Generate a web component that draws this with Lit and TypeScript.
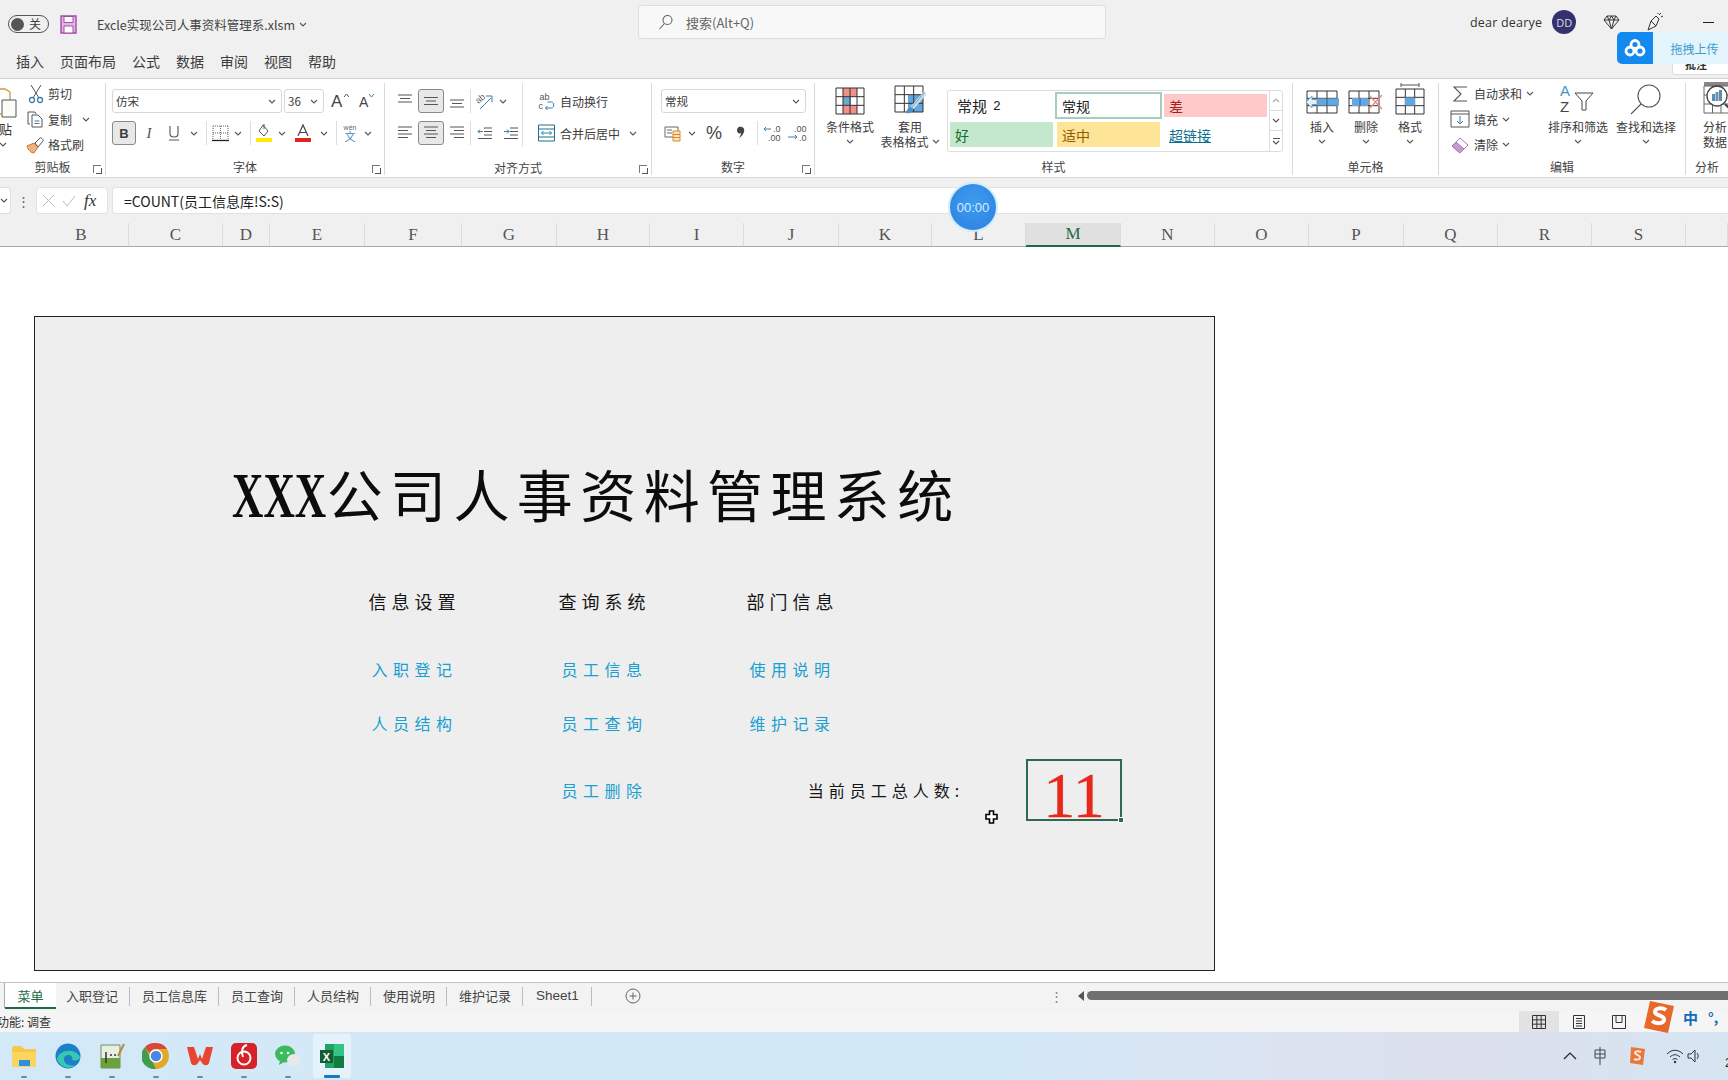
import { LitElement, html, css } from "lit";
import { customElement } from "lit/decorators.js";

const chev = html`<svg class="chev" width="8" height="5" viewBox="0 0 8 5"><path d="M1 1l3 3 3-3" fill="none" stroke="#555" stroke-width="1.1"/></svg>`;

// little table drawn for the ribbon's big buttons
const grid = (x: number, y: number, w: number, h: number, cols: number, rows: number) => {
  const cw = w / cols, rh = h / rows;
  let d = `M${x} ${y}h${w}v${h}h${-w}z`;
  for (let i = 1; i < cols; i++) d += `M${x + cw * i} ${y}v${h}`;
  for (let i = 1; i < rows; i++) d += `M${x} ${y + rh * i}h${w}`;
  return d;
};

const lines = (kind: string) => {
  const rows: Record<string, string> = {
    top: "M2 3h14M4 6.5h10M2 10h14",
    mid: "M2 5.5h14M4 9h10M2 12.5h14",
    bot: "M2 8h14M4 11.5h10M2 15h14",
    left: "M2 3h14M2 6.5h10M2 10h14M2 13.5h10",
    center: "M2 3h14M4 6.5h10M2 10h14M4 13.5h10",
    right: "M2 3h14M6 6.5h10M2 10h14M6 13.5h10",
  };
  return html`<svg width="18" height="18" viewBox="0 0 18 18"><path d=${rows[kind]} fill="none" stroke="#555" stroke-width="1"/></svg>`;
};

const icons = {
  toggleSave: html`<svg width="17" height="19" viewBox="0 0 17 19"><path d="M1 1h15v17H1z" fill="#e3b5e6" stroke="#a04ea6" stroke-width="1.4"/><path d="M4 1.5h9v6H4zM4 11h9v7H4z" fill="#fff" stroke="#a04ea6"/></svg>`,
  search: html`<svg width="16" height="16" viewBox="0 0 16 16"><circle cx="9.5" cy="6" r="4.5" fill="none" stroke="#666" stroke-width="1.1"/><path d="M6.5 9.5L1.5 15" stroke="#666" stroke-width="1.1"/></svg>`,
  diamond: html`<svg width="17" height="15" viewBox="0 0 17 15"><path d="M4 1h9l3 4-7.5 9L1 5zM1 5h15M6 5l2.500 9L11 5M4 1l2 4 2.500-4 2.500 4 2-4" fill="none" stroke="#333"/></svg>`,
  party: html`<svg width="18" height="20" viewBox="0 0 18 20"><path d="M2 18l3-9 5 5zM5 9l5-5 3 3-3 7" fill="none" stroke="#333"/><path d="M13 3l2-2M15 5l2-1M12 1l0 1" stroke="#333"/></svg>`,
  cloud: html`<svg width="22" height="18" viewBox="0 0 22 18"><g fill="none" stroke="#fff" stroke-width="2.800"><circle cx="11" cy="5.500" r="4"/><circle cx="6" cy="12" r="4"/><circle cx="16" cy="12" r="4"/></g></svg>`,
  pasteBoard: html`<svg width="20" height="40" viewBox="0 0 20 40"><path d="M-6 6h12l5 3v8" fill="none" stroke="#c99a3c" stroke-width="1.300"/><path d="M3 17h14v17H3z" fill="#fbfbf7" stroke="#555"/><path d="M0 31h3" stroke="#c99a3c" stroke-width="1.300"/></svg>`,
  cut: html`<svg width="18" height="20" viewBox="0 0 18 20"><path d="M4 1l8 13M14 1L6 14" stroke="#555" fill="none"/><circle cx="5" cy="16" r="2.500" fill="none" stroke="#3b7fa8" stroke-width="1.300"/><circle cx="13" cy="16" r="2.500" fill="none" stroke="#3b7fa8" stroke-width="1.300"/></svg>`,
  copy: html`<svg width="18" height="18" viewBox="0 0 18 18"><path d="M3 14H1V2h7l1 2" fill="none" stroke="#555"/><path d="M5 5h6l4 4v8H5z" fill="#fff" stroke="#555"/><path d="M7.500 11h5M7.500 13.500h5" stroke="#3b7fa8"/></svg>`,
  painter: html`<svg width="20" height="18" viewBox="0 0 20 18"><path d="M1 10l7-3 4 4-4 6c-3 0-6-3-7-7z" fill="#f0b27a" stroke="#c9762f"/><path d="M9 7l5-5c1-1 4 2 3 3l-5 6z" fill="#fff" stroke="#555"/></svg>`,
  growA: html`<svg width="20" height="18" viewBox="0 0 20 18"><text x="1" y="15" font-size="17" font-family="Liberation Sans" fill="#444">A</text><path d="M14 5l2.500-3L19 5" fill="none" stroke="#555"/></svg>`,
  shrinkA: html`<svg width="20" height="18" viewBox="0 0 20 18"><text x="3" y="15" font-size="14" font-family="Liberation Sans" fill="#444">A</text><path d="M13 2l2.500 3L18 2" fill="none" stroke="#3b7fa8"/></svg>`,
  under: html`<svg width="14" height="18" viewBox="0 0 14 18"><path d="M3 2v8c0 4 8 4 8 0V2M2 16h10" fill="none" stroke="#555" stroke-width="1.100"/></svg>`,
  border: html`<svg width="17" height="18" viewBox="0 0 17 18"><path d="M1 2h15M1 9h15M8.500 2v14M1 2v14M16 2v14" fill="none" stroke="#666" stroke-dasharray="1 1"/><path d="M0 16.500h17" stroke="#222" stroke-width="1.300"/></svg>`,
  fill: html`<svg width="18" height="20" viewBox="0 0 18 20"><path d="M8 2l5 6-4 5-5-5z" fill="none" stroke="#555"/><path d="M9 1v5" stroke="#555"/><path d="M1 15h16v4H1z" fill="#ffea00"/></svg>`,
  colorA: html`<svg width="18" height="20" viewBox="0 0 18 20"><path d="M4 13L9 2l5 11M6 9.500h6" fill="none" stroke="#444" stroke-width="1.200"/><path d="M1 15h16v4H1z" fill="#e2231a"/></svg>`,
  wen: html`<svg width="20" height="20" viewBox="0 0 20 20"><text x="10" y="7" font-size="7" text-anchor="middle" font-family="Liberation Sans" fill="#666">wén</text><text x="10" y="18" font-size="11" text-anchor="middle" font-family="Noto Sans CJK SC" fill="#3b8fb8">文</text></svg>`,
  orient: html`<svg width="20" height="20" viewBox="0 0 20 20"><text x="2" y="11" font-size="9" transform="rotate(-40 6 9)" font-family="Liberation Sans" fill="#666">ab</text><path d="M6 18L17 7M12 5h6v6" fill="none" stroke="#3b7fa8"/></svg>`,
  wrap: html`<svg width="18" height="20" viewBox="0 0 18 20"><text x="2" y="9" font-size="9" font-family="Liberation Sans" fill="#555">ab</text><text x="1" y="18" font-size="9" font-family="Liberation Sans" fill="#555">c</text><path d="M10 11h4c3 0 3 6 0 6H8m2-2l-2 2 2 2" fill="none" stroke="#3b7fa8"/></svg>`,
  outdent: html`<svg width="18" height="18" viewBox="0 0 18 18"><path d="M8 4h8M8 7.500h8M8 11h8M2 14.500h14" stroke="#555" fill="none"/><path d="M7 7.500H2m2-2l-2 2 2 2" stroke="#3b7fa8" fill="none"/></svg>`,
  indent: html`<svg width="18" height="18" viewBox="0 0 18 18"><path d="M8 4h8M8 7.500h8M8 11h8M2 14.500h14" stroke="#555" fill="none"/><path d="M2 7.500h5m-2-2l2 2-2 2" stroke="#3b7fa8" fill="none"/></svg>`,
  merge: html`<svg width="18" height="18" viewBox="0 0 18 18"><path d="M1 1h16v16H1zM1 5h16M1 13h16" fill="none" stroke="#1f6e8c"/><path d="M4 9h10M6 7L4 9l2 2M12 7l2 2-2 2" fill="none" stroke="#3b7fa8"/></svg>`,
  money: html`<svg width="18" height="18" viewBox="0 0 18 18"><path d="M1 3h13v10H1z" fill="#fff" stroke="#666"/><path d="M3 6h5M3 9h5" stroke="#666"/><path d="M9 7h7v10H9z" fill="#fbe3c0" stroke="#d98a2b"/><path d="M9 10.500h7M9 13.500h7" stroke="#d98a2b"/></svg>`,
  comma: html`<svg width="10" height="16" viewBox="0 0 10 16"><path d="M3 2c4-1 6 2 5 5-1 3-3 5-5 6 1-2 2-3 2-5-2 1-4 0-4-3 0-1 1-3 2-3z" fill="#444"/></svg>`,
  decUp: html`<svg width="22" height="18" viewBox="0 0 22 18"><text x="11" y="8" font-size="9" font-family="Liberation Sans" fill="#555">.0</text><text x="6" y="17" font-size="9" font-family="Liberation Sans" fill="#555">.00</text><path d="M9 5H2m2-2L2 5l2 2" fill="none" stroke="#3b7fa8"/></svg>`,
  decDown: html`<svg width="22" height="18" viewBox="0 0 22 18"><text x="8" y="8" font-size="9" font-family="Liberation Sans" fill="#555">.00</text><text x="13" y="17" font-size="9" font-family="Liberation Sans" fill="#555">.0</text><path d="M2 13h9m-2-2l2 2-2 2" fill="none" stroke="#3b7fa8"/></svg>`,
  condFmt: html`<svg width="30" height="28" viewBox="0 0 30 28"><path d="M8 1h14v8.700H8zM8 18.300h14V27H8z" fill="#f28f86"/><path d="M8 9.700h8v8.600H8z" fill="#6fa8cf"/><path d=${grid(1, 1, 28, 26, 4, 3)} fill="none" stroke="#333"/></svg>`,
  tableFmt: html`<svg width="32" height="30" viewBox="0 0 32 30"><path d="M14 10h15v17H14z" fill="#62a7e0"/><path d=${grid(1, 1, 28, 26, 3, 3)} fill="none" stroke="#333"/><path d="M31 8L18 23" stroke="#c8dbe8" stroke-width="4"/><path d="M31 7L18 22" stroke="#7fa7bf" stroke-width="1"/><path d="M12 28c1-5 4-7 7-5 0 4-3 6-7 5z" fill="#4b91c2"/></svg>`,
  insert: html`<svg width="36" height="26" viewBox="0 0 36 26"><path d=${grid(3, 2, 30, 22, 3, 3)} fill="none" stroke="#333"/><path d="M12 9.500h23v7H12z" fill="#62a7e0"/><path d="M23 9.500v7" stroke="#2a5f85"/><path d="M13 10.500H8V7l-6 6 6 6v-3.500h5z" fill="#e4eff6" stroke="#6aa6cb"/></svg>`,
  remove: html`<svg width="36" height="26" viewBox="0 0 36 26"><path d=${grid(1, 2, 30, 22, 3, 3)} fill="none" stroke="#333"/><path d="M4 9h16v8H4z" fill="#62a7e0"/><path d="M12 9v8" stroke="#2a5f85"/><path d="M21 6l13 14M34 6L21 20" stroke="#e98a82" stroke-width="1.300"/></svg>`,
  format: html`<svg width="30" height="32" viewBox="0 0 30 32"><path d="M6 2h18M6 0v4M24 0v4" stroke="#555"/><path d=${grid(1, 6, 28, 25, 3, 3)} fill="none" stroke="#333"/><path d="M10 14.500h10v8H10z" fill="#62a7e0"/></svg>`,
  sum: html`<svg width="16" height="18" viewBox="0 0 16 18"><path d="M15 2H2l7 7-7 7h13" fill="none" stroke="#555" stroke-width="1.100"/></svg>`,
  fillDown: html`<svg width="20" height="18" viewBox="0 0 20 18"><path d="M1 1h18v16H1zM1 4h18" fill="none" stroke="#555"/><path d="M10 6v8m-3-3l3 3 3-3" fill="none" stroke="#3b7fa8"/></svg>`,
  eraser: html`<svg width="18" height="18" viewBox="0 0 18 18"><path d="M1 10l8-8 8 7-8 8z" fill="#fff" stroke="#a878b4"/><path d="M1 10l4-4 8 7-4 4z" fill="#c79ad0" stroke="#a878b4"/></svg>`,
  sort: html`<svg width="36" height="32" viewBox="0 0 36 32"><text x="0" y="13" font-size="15" font-family="Liberation Sans" fill="#4b91c2">A</text><text x="0" y="29" font-size="15" font-family="Liberation Sans" fill="#444">Z</text><path d="M15 10h18l-7 8v9h-4v-9z" fill="#fff" stroke="#444"/></svg>`,
  find: html`<svg width="34" height="32" viewBox="0 0 34 32"><circle cx="20" cy="13" r="11" fill="none" stroke="#555" stroke-width="1.100"/><path d="M12 21L2 31" stroke="#555" stroke-width="1.100"/></svg>`,
  analyze: html`<svg width="36" height="34" viewBox="0 0 36 34"><path d="M1 1h34v4H1z" fill="#888"/><path d=${grid(1, 5, 34, 27, 4, 3)} fill="#fff" stroke="#666"/><circle cx="14" cy="15" r="10" fill="#fff" stroke="#444" stroke-width="1.300"/><path d="M22 23l9 9" stroke="#444" stroke-width="2"/><path d="M9 13h3v7H9zM16 9h3v11h-3z" fill="#4b91c2"/><path d="M12.500 11h3v9h-3z" fill="#888"/></svg>`,
  normal: html`<svg width="14" height="14" viewBox="0 0 14 14"><path d=${grid(0.5, 0.5, 13, 13, 3, 3)} fill="none" stroke="#333"/></svg>`,
  page: html`<svg width="14" height="14" viewBox="0 0 14 14"><path d="M1.500 .5h11v13h-11zM4 3.500h6M4 6h6M4 8.500h6M4 11h6" fill="none" stroke="#333"/></svg>`,
  breakView: html`<svg width="14" height="14" viewBox="0 0 14 14"><path d="M.5.500h13v13H.500zM4 .5v7h6v-7" fill="none" stroke="#333"/></svg>`,
  addSheet: html`<svg width="16" height="16" viewBox="0 0 16 16"><circle cx="8" cy="8" r="7" fill="none" stroke="#666"/><path d="M8 4.500v7M4.500 8h7" stroke="#666"/></svg>`,
  sogou: html`<svg width="34" height="34" viewBox="0 0 34 34"><path d="M8 1l24 5-6 27-24-5z" fill="#e8672a"/><path d="M24 10c-4-3-11-2-11 2s10 3 9 8c-1 4-8 4-12 1" fill="none" stroke="#fff" stroke-width="4"/></svg>`,
  sogouTray: html`<svg width="18" height="20" viewBox="0 0 18 20"><path d="M3 1l14 2-2 16-13-2z" fill="#e8773d"/><path d="M13 6c-2-1-6-1-6 1s6 2 5 5c-1 2-4 2-6 1" fill="none" stroke="#fbe7d6" stroke-width="2"/></svg>`,
  cursor: html`<svg width="13" height="14" viewBox="0 0 13 14"><path d="M4.500 1h4v3.500H12v4.500H8.500v4h-4V9H1V4.500h3.500z" fill="#fff" stroke="#000" stroke-width="1.600"/></svg>`,
  trayUp: html`<svg width="14" height="10" viewBox="0 0 14 10"><path d="M1 8l6-6 6 6" fill="none" stroke="#222" stroke-width="1.200"/></svg>`,
  trayIme: html`<svg width="14" height="20" viewBox="0 0 14 20"><path d="M2 4h10v8H2zM7 1v18M2 8h10" fill="none" stroke="#444"/></svg>`,
  wifi: html`<svg width="18" height="16" viewBox="0 0 18 16"><path d="M1 6c5-5 11-5 16 0M4 9c3-3 7-3 10 0M6.500 11.500c1.500-1.200 3.500-1.200 5 0" fill="none" stroke="#333"/><circle cx="9" cy="14" r="1.200" fill="#333"/></svg>`,
  speaker: html`<svg width="14" height="16" viewBox="0 0 14 16"><path d="M1 6h3l4-4v12l-4-4H1z" fill="none" stroke="#333"/><path d="M10 5c1.500 2 1.500 4 0 6" fill="none" stroke="#333"/></svg>`,
};

const apps = [
  html`<svg width="28" height="28" viewBox="0 0 28 28"><path d="M2 6c0-1 1-2 2-2h7l3 3h12v18H2z" fill="#f5c84c"/><path d="M2 10h24v15H2z" fill="#fbd65e"/><path d="M9 18h11v6H9z" fill="#2f8fd8"/></svg>`,
  html`<svg width="28" height="28" viewBox="0 0 28 28"><circle cx="14" cy="14" r="12.500" fill="#1b7fc9"/><path d="M3 17C5 8 20 5 26 15c0 3-4 4-8 3 2-5-6-7-8-2-1 5 5 9 12 7-6 5-16 3-19-6z" fill="#36c9b0"/></svg>`,
  html`<svg width="28" height="28" viewBox="0 0 28 28"><path d="M3 3h19v23H3z" fill="#e6efe0" stroke="#6f8f5a"/><path d="M3 16h19v10H3z" fill="#6ea13b"/><path d="M8 10v11M12 13h2M16 13h2" stroke="#333" stroke-width="1.500"/><path d="M20 14l6-12" stroke="#b58a2f" stroke-width="2"/></svg>`,
  html`<svg width="28" height="28" viewBox="0 0 28 28"><circle cx="14" cy="14" r="13" fill="#e0a92a"/><path d="M14 1a13 13 0 0 1 11 6H14a7 7 0 0 0-6.500 4L3 5a13 13 0 0 1 11-4z" fill="#d9463a"/><path d="M3 5l6 12 5 10A13 13 0 0 1 3 5z" fill="#3f9e4d"/><circle cx="14" cy="14" r="6" fill="#4a86e8" stroke="#fff" stroke-width="1.500"/></svg>`,
  html`<svg width="28" height="28" viewBox="0 0 28 28"><path d="M1 5h7l4 12 2-5 2 5 4-12h7l-4 16c-1 3-5 3-7 0l-2-3-2 3c-2 3-6 3-7 0z" fill="#e8442f"/></svg>`,
  html`<svg width="28" height="28" viewBox="0 0 28 28"><rect x="1" y="1" width="26" height="26" rx="5" fill="#d8222a"/><circle cx="14" cy="16" r="6.500" fill="none" stroke="#fff" stroke-width="2"/><path d="M17 3c-5 1-6 6-4 12" fill="none" stroke="#fff" stroke-width="2"/></svg>`,
  html`<svg width="28" height="28" viewBox="0 0 28 28"><ellipse cx="11" cy="12" rx="10" ry="8.500" fill="#3dbb5c"/><path d="M6 18l-1 5 5-3z" fill="#3dbb5c"/><circle cx="7.500" cy="11" r="1.300" fill="#fff"/><circle cx="14" cy="11" r="1.300" fill="#fff"/><ellipse cx="20" cy="18" rx="7" ry="6" fill="#e8e8e8"/></svg>`,
  html`<svg width="28" height="28" viewBox="0 0 28 28"><path d="M7 2h19v24H7z" fill="#21a366"/><path d="M16 2h10v12H16z" fill="#33c481"/><path d="M16 14h10v12H16z" fill="#107c41"/><rect x="2" y="8" width="13" height="13" fill="#185c37"/><text x="8.500" y="18.500" font-size="11" font-weight="bold" text-anchor="middle" font-family="Liberation Sans" fill="#fff">X</text></svg>`,
];

const columns: [string, number][] = [
  ["B", 95], ["C", 94], ["D", 47], ["E", 95], ["F", 97], ["G", 95], ["H", 93], ["I", 94],
  ["J", 95], ["K", 93], ["L", 94], ["M", 95], ["N", 94], ["O", 94], ["P", 95], ["Q", 94],
  ["R", 94], ["S", 94], ["", 42],
];

const menu = ["插入", "页面布局", "公式", "数据", "审阅", "视图", "帮助"];
const sheets = ["入职登记", "员工信息库", "员工查询", "人员结构", "使用说明", "维护记录", "Sheet1"];

@customElement("app-root")
export class AppRoot extends LitElement {
  static styles = css`
    :host {
      display: block;
      width: 1728px;
      height: 1080px;
      overflow: hidden;
      position: relative;
      font-family: "Noto Sans CJK SC", "Liberation Sans", sans-serif;
      font-size: 12px;
      color: #3c3c3c;
      background: #f0f0f0;
    }
    svg { display: block; flex: none; }

    .title {
      height: 48px;
      display: grid;
      grid-template-columns: 638px 468px 1fr;
      align-items: center;
    }
    .title-left { display: flex; align-items: center; padding-left: 8px; }
    .switch {
      width: 41px;
      height: 18px;
      box-sizing: border-box;
      border: 1px solid #555;
      border-radius: 10px;
      display: flex;
      align-items: center;
      gap: 5px;
      padding-left: 2px;
      font-size: 12px;
      line-height: 1;
    }
    .switch i { width: 13px; height: 13px; border-radius: 50%; background: #555; }
    .save { margin-left: 11px; }
    .file { margin-left: 20px; font-size: 12.500px; display: flex; align-items: center; gap: 4px; color: #444; }
    .searchbox {
      height: 32px;
      margin-top: -4px;
      background: #f8f8f8;
      border: 1px solid #ddd;
      border-radius: 3px;
      display: flex;
      align-items: center;
      padding-left: 19px;
      gap: 12px;
      color: #666;
      font-size: 13px;
    }
    .title-right { display: flex; align-items: center; padding-left: 364px; margin-top: -4px; white-space: nowrap; }
    .user { font-family: "Open Sans", sans-serif; font-size: 12.500px; letter-spacing: 0.2px; color: #333; }
    .avatar {
      width: 24px; height: 24px; margin-left: 10px; border-radius: 50%;
      background: #35306e; color: #ddd; font-family: "Open Sans", sans-serif; font-size: 11px;
      display: flex; align-items: center; justify-content: center;
    }
    .gem { margin-left: 27px; }
    .party { margin-left: 26px; }
    .min { margin-left: 39px; width: 11px; height: 1px; background: #222; flex: none; }

    .menu { height: 30px; box-sizing: border-box; padding: 0 0 5px 16px; display: flex; gap: 16px; align-items: center; font-size: 14px; line-height: 1; }

    .ribbon {
      height: 100px;
      box-sizing: border-box;
      background: #fff;
      border-top: 1px solid #d2d2d2;
      border-bottom: 1px solid #d8d8d8;
      display: flex;
      padding: 4px 0 2px;
      overflow: hidden;
    }
    .grp { position: relative; box-sizing: border-box; flex: none; display: flex; flex-direction: column; border-right: 1px solid #d9d9d9; }
    .grp:last-child { border-right: 0; }
    .body { height: 76px; box-sizing: border-box; display: flex; }
    .label { height: 17px; line-height: 17px; text-align: center; font-size: 12px; color: #444; }
    .launch { position: absolute; right: 4px; bottom: 2px; width: 7px; height: 7px; border-left: 1px solid #777; border-top: 1px solid #777; }
    .launch::after { content: ""; position: absolute; left: 2px; top: 2px; width: 5px; height: 5px; border-right: 1px solid #555; border-bottom: 1px solid #555; }
    .g-clip { width: 106px; }
    .g-font { width: 279px; }
    .g-align { width: 267px; }
    .g-num { width: 163px; }
    .g-style { width: 478px; }
    .g-cell { width: 146px; }
    .g-edit { width: 247px; }
    .g-ana { width: 42px; }

    .paste { width: 22px; font-size: 13px; margin-left: -1px; line-height: 1; overflow: hidden; flex: none; }
    .paste span { display: block; margin-left: 0; margin-top: -1px; color: #333; }
    .paste .chev { margin: 7px 0 0 0; }
    .stack { display: flex; flex-direction: column; margin-top: -2px; }
    .stack-row { height: 25.500px; display: flex; align-items: center; gap: 2px; white-space: nowrap; }
    .stack-row > svg:first-child { width: 20px; }
    .clip-list { margin-left: 5px; }

    .two { flex-direction: column; padding-top: 6px; gap: 8px; }
    .tools { height: 24px; display: flex; align-items: center; }
    .tools > span { display: flex; align-items: center; justify-content: center; height: 24px; flex: none; }
    .f-pad { padding-left: 6px; }
    .n-pad { padding-left: 9px; }
    .w8 { width: 8px; } .w12 { width: 12px; } .w14 { width: 14px; } .w16 { width: 16px; } .w20 { width: 20px; }
    .w24 { width: 24px; display: flex; align-items: center; justify-content: center; } .w26 { width: 26px; } .w30 { width: 30px; }
    .bar { width: 1px; height: 24px; background: #ddd; margin: 0 3.500px; flex: none; }
    .select {
      height: 24px; box-sizing: border-box; border: 1px solid #d8d8d8; border-radius: 3px; flex: none;
      display: flex; align-items: center; justify-content: space-between; padding: 0 5px 0 3px; font-size: 11.500px;
    }
    .s-font { width: 170px; margin-right: 2px; }
    .s-size { width: 40px; margin-right: 3px; }
    .s-num { width: 145px; }
    .on { background: #e8e8e8; border: 1px solid #8a8a8a; border-radius: 3px; box-sizing: border-box; }
    .bold { font-family: "Liberation Sans", sans-serif; font-weight: bold; font-size: 13px; }
    .ital { font-family: "Liberation Serif", serif; font-style: italic; font-size: 15px; color: #555; }
    .pct { font-family: "Liberation Sans", sans-serif; font-size: 18px; color: #444; }

    .al-a { width: 138px; padding-left: 7px; box-sizing: border-box; border-right: 1px solid #ddd; height: 64px; }
    .al-a .bar { margin-left: 0; margin-right: 1px; }
    .al-b { padding-left: 13px; }
    .al-b .tools { gap: 3px; white-space: nowrap; }
    .al-b .tools > svg { width: 21px; }

    .big { display: flex; flex-direction: column; align-items: center; line-height: 15px; flex: none; text-align: center; white-space: nowrap; }
    .big .pic { height: 32px; display: flex; align-items: flex-end; justify-content: center; margin-bottom: 4px; }
    .big .chev { margin-top: 5px; }
    .big .inline { display: flex; align-items: center; gap: 3px; }
    .big .inline .chev { margin-top: 0; }
    .g-style .body { padding-left: 7px; }
    .b-cond { width: 56px; }
    .b-table { width: 66px; margin-left: -1px; margin-right: 4px; }
    .gallery {
      width: 336px; height: 62px; margin-top: 7px; box-sizing: border-box; border: 1px solid #ddd; border-radius: 3px;
      display: grid; grid-template-columns: 107px 107px 107px 13px; grid-template-rows: 29px 31px;
    }
    .cell { display: flex; align-items: center; padding-left: 5px; margin: 3px 2px; font-size: 14px; line-height: 1; color: #222; }
    .c-n2 { font-size: 15px; padding-left: 7px; }
    .c-n2 em { font-family: "Liberation Mono", monospace; font-style: normal; font-size: 13px; margin: 2px 0 0 6px; }
    .c-sel { border: 2px solid #a9cdbd; margin: 1px 0 1px 0; padding-left: 5px; }
    .c-bad { background: #ffc9c9; color: #a2211d; }
    .c-good { background: #c4e8cc; color: #1a6a2e; margin-bottom: 4px; margin-top: 2px; }
    .c-mid { background: #fde497; color: #8e5a04; margin-bottom: 4px; margin-top: 2px; }
    .c-link { color: #0e6f92; text-decoration: underline; margin-top: 2px; margin-bottom: 4px; }
    .gscroll { grid-column: 4; grid-row: 1 / 3; border-left: 1px solid #ddd; display: grid; grid-template-rows: 1fr 1fr 1fr; }
    .gscroll span { display: flex; flex-direction: column; gap: 1px; align-items: center; justify-content: center; border-bottom: 1px solid #ddd; }
    .gscroll span:last-child { border-bottom: 0; }
    .gscroll .up .chev { transform: rotate(180deg); opacity: 0.5; }
    .gscroll i { width: 7px; height: 1px; background: #555; }
    .g-cell .body { padding-left: 7px; }
    .g-cell .big { width: 44px; }
    .edit-list { margin-left: 11px; width: 93px; flex: none; }
    .edit-list .stack-row { gap: 4px; }
    .b-sort { width: 70px; }
    .b-find { width: 66px; }
    .g-ana .big { width: 30px; margin-left: 17px; align-items: flex-start; }

    .fbar { height: 29px; margin-top: 9px; display: flex; align-items: stretch; background: #f0f0f0; }
    .name { width: 10px; background: #fff; border: 1px solid #ddd; border-left: 0; border-radius: 0 4px 4px 0; display: flex; align-items: center; margin-bottom: 2px; }
    .dots { width: 25px; color: #666; display: flex; align-items: center; justify-content: center; font-size: 13px; padding-bottom: 2px; box-sizing: border-box; }
    .fx { width: 72px; background: #fff; border: 1px solid #e2e2e2; border-radius: 4px; margin-bottom: 2px; display: flex; align-items: center; gap: 7px; padding-left: 5px; box-sizing: border-box; }
    .fx i { font-family: "Liberation Serif", serif; font-size: 17px; color: #333; margin-left: 1px; }
    .input { flex: 1; margin-left: 4px; margin-bottom: 2px; background: #fff; border: 1px solid #e2e2e2; border-right: 0; border-radius: 4px 0 0 4px; display: flex; align-items: center; padding-left: 11px; font-size: 14px; color: #222; }

    .heads { height: 31px; display: flex; padding-left: 34px; background: #f0f0f0; box-sizing: border-box; border-bottom: 1px solid #a8a8a8; }
    .heads span {
      box-sizing: border-box; height: 23px; margin-top: 7px; border-right: 1px solid #dcdcdc; display: flex; align-items: center; justify-content: center;
      font-family: "Liberation Serif", serif; font-size: 17px; color: #555; flex: none;
    }
    .heads .sel { background: #e0e0e0; border-bottom: 2px solid #1f6b45; color: #1f6b45; height: 24px; }

    .sheet { height: 735px; box-sizing: border-box; background: #fff; padding: 69px 0 0 34px; }
    .panel {
      width: 1181px; height: 655px; box-sizing: border-box; background: #eeeeee; border: 1px solid #222;
      display: grid;
      grid-template-columns: 95px 94px 47px 95px 97px 95px 93px 94px 95px 93px 94px 95px 1fr;
      grid-template-rows: 142px 70px 47px 50px 18px 50px 4px 50px 11px 62px;
      color: #111;
    }
    .main {
      grid-row: 2; grid-column: 1 / -1; align-self: center; justify-self: start;
      margin-left: 197px; white-space: nowrap; font-size: 56px; line-height: 70px; letter-spacing: 7.400px; color: #0c0c0c; font-weight: 400;
    }
    .xxx {
      display: inline-block; font-family: "Liberation Serif", serif; font-weight: bold; font-size: 64px; letter-spacing: 0;
      transform: scaleX(0.68); transform-origin: 0 50%; margin-right: -44px;
    }
    .hd, .lk { display: flex; align-items: center; justify-content: center; white-space: nowrap; }
    .hd { font-size: 18px; letter-spacing: 5px; color: #151515; }
    .lk { font-size: 16px; letter-spacing: 5.500px; color: #1a9fd0; }
    .c-f { grid-column: 5; } .c-h { grid-column: 7; } .c-j { grid-column: 9; }
    .r-h { grid-row: 4; } .r-1 { grid-row: 6; } .r-2 { grid-row: 8; } .r-3 { grid-row: 10; }
    .total { grid-row: 10; grid-column: 9 / 12; display: flex; align-items: center; justify-content: center; font-size: 16px; letter-spacing: 5px; color: #151515; }
    .count {
      grid-row: 10; grid-column: 12; position: relative; box-sizing: border-box; border: 2px solid #2d6a50; margin-left: -1px;
      font-family: "Liberation Serif", serif; font-size: 64px; line-height: 70px; color: #e8281a; text-align: center; -webkit-text-stroke: 0.4px #e8281a;
    }
    .count::after { content: ""; position: absolute; right: -4px; bottom: -4px; width: 6px; height: 6px; background: #2d6a50; border: 1px solid #fff; box-sizing: border-box; }
    .pointer { position: absolute; left: 985px; top: 810px; }

    .tabs { height: 29px; box-sizing: border-box; background: #f3f3f3; border-top: 1px solid #c4c4c4; display: flex; align-items: stretch; }
    .tab-first { width: 4px; border-right: 1px solid #aaa; margin-bottom: 3px; flex: none; }
    .tab { display: flex; align-items: center; justify-content: center; font-size: 13px; padding: 0 12px; color: #444; position: relative; margin-bottom: 3px; }
    .tab::after { content: ""; position: absolute; right: 0; top: 4px; bottom: 2px; width: 1px; background: #bbb; }
    .tab.active { width: 51px; margin-right: -2px; padding: 0; box-sizing: border-box; background: #fff; color: #1f6b45; border-bottom: 2px solid #1f6b45; margin-bottom: 2px; z-index: 1; }
    .tab.active::after { display: none; }
    .tab.sheet1 { font-family: "Liberation Sans", sans-serif; font-size: 13.500px; padding: 0 13px; }
    .add { display: flex; align-items: center; margin-left: 33px; padding-bottom: 3px; }
    .hscroll { position: absolute; left: 1034px; right: 0; top: 983px; height: 25px; display: flex; align-items: center; }
    .hdots { width: 44px; text-align: center; color: #888; font-size: 13px; }
    .harrow { width: 0; height: 0; border: 5px solid transparent; border-right: 6px solid #555; border-left: 0; }
    .hthumb { flex: 1; height: 9px; margin-left: 3px; border-radius: 5px 0 0 5px; background: #707070; }

    .status { height: 21px; box-sizing: border-box; background: #f5f5f5; display: flex; align-items: center; font-size: 12px; color: #333; justify-content: space-between; }
    .status-text { margin-left: -3px; }
    .views { display: flex; height: 21px; margin-right: 89px; align-items: stretch; }
    .views span { width: 40px; display: flex; align-items: center; justify-content: center; }
    .views .on-view { background: #e2e2e2; }

    .taskbar {
      height: 48px; background: linear-gradient(90deg, #d4e9f8 0%, #d3e8f7 58%, #dbe4f2 72%, #dcdfec 85%, #d6e5f2 100%);
      display: flex; align-items: center; padding-left: 2px; position: relative;
    }
    .app { width: 44px; height: 44px; box-sizing: border-box; display: flex; align-items: center; justify-content: center; position: relative; border-radius: 3px; flex: none; }
    .app::after { content: ""; position: absolute; bottom: 0; left: 19px; width: 6px; height: 2px; border-radius: 1px; background: #7a8a96; }
    .app.live { background: #e6f2fa; width: 38px; margin: 0 3px; }
    .app.live::after { left: 11px; width: 16px; height: 3px; background: #1a78c2; }
    .tray { margin-left: auto; display: flex; align-items: center; white-space: nowrap; }
    .t-a { margin-right: 16px; }
    .t-b { margin-right: 21px; }
    .t-c { margin-right: 20px; }
    .t-d { margin-right: 3px; }
    .t-e { margin-right: 24px; }
    .t-clock { font-size: 12px; width: 3px; overflow: hidden; font-family: "Liberation Sans", sans-serif; margin-top: 14px; color: #222; }

    .timer {
      position: absolute; left: 948px; top: 182px; width: 50px; height: 50px; box-sizing: border-box; border-radius: 50%;
      background: radial-gradient(circle at 50% 40%, #3f9cf0, #2c7fe0); border: 2px solid #cdeffa; color: #d6efff;
      display: flex; align-items: center; justify-content: center; font-size: 13px; font-family: "Liberation Sans", sans-serif;
    }
    .drop { position: absolute; left: 1617px; top: 32px; width: 111px; height: 32px; display: flex; background: #e3f4fd; border-radius: 5px 0 0 5px; overflow: hidden; }
    .drop-ic { width: 36px; background: #1289ee; display: flex; align-items: center; justify-content: center; }
    .drop-tx { flex: 1; display: flex; align-items: center; justify-content: center; padding-left: 8px; color: #3b9ad0; font-size: 12px; }
    .note { position: absolute; left: 1672px; top: 64px; width: 60px; height: 11px; box-sizing: border-box; background: #fff; border: 1px solid #ddd; border-top: 0; border-radius: 0 0 3px 3px; overflow: hidden; font-size: 11px; line-height: 0; padding-left: 12px; font-weight: bold; color: #333; }
    .ime { position: absolute; left: 1642px; top: 1000px; display: flex; align-items: center; gap: 6px; }
    .ime b { font-size: 15px; color: #0f6cbd; margin-left: 1px; }
    .ime u { text-decoration: none; font-size: 14px; font-weight: bold; color: #0f6cbd; margin-left: 4px; }
  `;

  big(icon: unknown, cls: string, first: string, second = "") {
    return html`<div class="big ${cls}">
      <div class="pic">${icon}</div>
      <div>${first}</div>
      ${second
        ? html`<div class="inline">${second} ${chev}</div>`
        : html`${chev}`}
    </div>`;
  }

  renderRibbon() {
    return html`<div class="ribbon">
      <div class="grp g-clip">
        <div class="body">
          <div class="paste">${icons.pasteBoard}<span>贴</span>${chev}</div>
          <div class="stack clip-list">
            <div class="stack-row">${icons.cut}<span>剪切</span></div>
            <div class="stack-row">${icons.copy}<span>复制</span><span class="w24">${chev}</span></div>
            <div class="stack-row">${icons.painter}<span>格式刷</span></div>
          </div>
        </div>
        <div class="label">剪贴板</div><i class="launch"></i>
      </div>

      <div class="grp g-font">
        <div class="body two f-pad">
          <div class="tools">
            <div class="select s-font"><span>仿宋</span>${chev}</div>
            <div class="select s-size"><span>36</span>${chev}</div>
            <span class="w26">${icons.growA}</span><span class="w26">${icons.shrinkA}</span>
          </div>
          <div class="tools">
            <span class="w24 on bold">B</span><span class="w26 ital">I</span><span class="w24">${icons.under}</span>
            <span class="w16">${chev}</span><i class="bar"></i>
            <span class="w20">${icons.border}</span><span class="w16">${chev}</span><i class="bar"></i>
            <span class="w20">${icons.fill}</span><span class="w16">${chev}</span>
            <span class="w26">${icons.colorA}</span><span class="w16">${chev}</span><i class="bar"></i>
            <span class="w20">${icons.wen}</span><span class="w16">${chev}</span>
          </div>
        </div>
        <div class="label">字体</div><i class="launch"></i>
      </div>

      <div class="grp g-align">
        <div class="body">
          <div class="two al-a body">
            <div class="tools">
              <span class="w26">${lines("top")}</span><span class="w26 on">${lines("mid")}</span><span class="w26">${lines("bot")}</span>
              <i class="bar"></i><span class="w24">${icons.orient}</span><span class="w14">${chev}</span>
            </div>
            <div class="tools">
              <span class="w26">${lines("left")}</span><span class="w26 on">${lines("center")}</span><span class="w26">${lines("right")}</span>
              <i class="bar"></i><span class="w26">${icons.outdent}</span><span class="w26">${icons.indent}</span>
            </div>
          </div>
          <div class="two al-b body">
            <div class="tools">${icons.wrap}<span>自动换行</span></div>
            <div class="tools">${icons.merge}<span>合并后居中</span><span class="w20">${chev}</span></div>
          </div>
        </div>
        <div class="label">对齐方式</div><i class="launch"></i>
      </div>

      <div class="grp g-num">
        <div class="body two n-pad">
          <div class="tools"><div class="select s-num"><span>常规</span>${chev}</div></div>
          <div class="tools">
            <span class="w24">${icons.money}</span><span class="w14">${chev}</span>
            <span class="w30 pct">%</span><span class="w24">${icons.comma}</span><i class="bar"></i>
            <span class="w24">${icons.decUp}</span><span class="w24">${icons.decDown}</span>
          </div>
        </div>
        <div class="label">数字</div><i class="launch"></i>
      </div>

      <div class="grp g-style">
        <div class="body">
          ${this.big(icons.condFmt, "b-cond", "条件格式")}
          ${this.big(icons.tableFmt, "b-table", "套用", "表格格式")}
          <div class="gallery">
            <div class="cell c-n2">常规<em>2</em></div>
            <div class="cell c-sel">常规</div>
            <div class="cell c-bad">差</div>
            <div class="gscroll"><span class="up">${chev}</span><span>${chev}</span><span><i></i>${chev}</span></div>
            <div class="cell c-good">好</div>
            <div class="cell c-mid">适中</div>
            <div class="cell c-link">超链接</div>
          </div>
        </div>
        <div class="label">样式</div>
      </div>

      <div class="grp g-cell">
        <div class="body">
          ${this.big(icons.insert, "", "插入")}
          ${this.big(icons.remove, "", "删除")}
          ${this.big(icons.format, "", "格式")}
        </div>
        <div class="label">单元格</div>
      </div>

      <div class="grp g-edit">
        <div class="body">
          <div class="stack edit-list">
            <div class="stack-row">${icons.sum}<span>自动求和</span><span class="w20">${chev}</span></div>
            <div class="stack-row">${icons.fillDown}<span>填充</span>${chev}</div>
            <div class="stack-row">${icons.eraser}<span>清除</span>${chev}</div>
          </div>
          ${this.big(icons.sort, "b-sort", "排序和筛选")}
          ${this.big(icons.find, "b-find", "查找和选择")}
        </div>
        <div class="label">编辑</div>
      </div>

      <div class="grp g-ana">
        <div class="body">
          <div class="big">
            <div class="pic">${icons.analyze}</div>
            <div>分析</div><div>数据</div>
          </div>
        </div>
        <div class="label">分析</div>
      </div>
    </div>`;
  }

  render() {
    return html`
      <div class="title">
        <div class="title-left">
          <div class="switch"><i></i><span>关</span></div>
          <span class="save">${icons.toggleSave}</span>
          <span class="file">Excle实现公司人事资料管理系.xlsm ${chev}</span>
        </div>
        <div class="searchbox">${icons.search}<span>搜索(Alt+Q)</span></div>
        <div class="title-right">
          <span class="user">dear dearye</span>
          <span class="avatar">DD</span>
          <span class="gem">${icons.diamond}</span>
          <span class="party">${icons.party}</span>
          <span class="min"></span>
        </div>
      </div>
      <div class="menu">${menu.map((m) => html`<span>${m}</span>`)}</div>
      ${this.renderRibbon()}
      <div class="fbar">
        <div class="name">${chev}</div>
        <div class="dots">⋮</div>
        <div class="fx">
          <svg width="13" height="13" viewBox="0 0 13 13"><path d="M1 1l11 11M12 1L1 12" stroke="#bbb"/></svg>
          <svg width="14" height="12" viewBox="0 0 14 12"><path d="M1 6l4 5 8-10" fill="none" stroke="#bbb"/></svg>
          <i>fx</i>
        </div>
        <div class="input">=COUNT(员工信息库!S:S)</div>
      </div>
      <div class="heads">
        ${columns.map(
          ([c, w]) => html`<span class=${c === "M" ? "sel" : ""} style="width:${w}px">${c}</span>`
        )}
      </div>
      <div class="sheet">
        <div class="panel">
          <div class="main"><span class="xxx">XXX</span>公司人事资料管理系统</div>
          <div class="hd c-f r-h">信息设置</div>
          <div class="hd c-h r-h">查询系统</div>
          <div class="hd c-j r-h">部门信息</div>
          <div class="lk c-f r-1">入职登记</div>
          <div class="lk c-h r-1">员工信息</div>
          <div class="lk c-j r-1">使用说明</div>
          <div class="lk c-f r-2">人员结构</div>
          <div class="lk c-h r-2">员工查询</div>
          <div class="lk c-j r-2">维护记录</div>
          <div class="lk c-h r-3">员工删除</div>
          <div class="total">当前员工总人数:</div>
          <div class="count">11</div>
        </div>
      </div>
      <div class="tabs">
        <div class="tab-first"></div>
        <div class="tab active">菜单</div>
        ${sheets.map(
          (s) => html`<div class="tab ${s === "Sheet1" ? "sheet1" : ""}">${s}</div>`
        )}
        <div class="add">${icons.addSheet}</div>
      </div>
      <div class="status">
        <span class="status-text">功能: 调查</span>
        <div class="views">
          <span class="on-view">${icons.normal}</span>
          <span>${icons.page}</span>
          <span>${icons.breakView}</span>
        </div>
      </div>
      <div class="taskbar">
        ${apps.map((a, i) => html`<div class="app ${i === 7 ? "live" : ""}">${a}</div>`)}
        <div class="tray">
          <span class="t-a">${icons.trayUp}</span>
          <span class="t-b">${icons.trayIme}</span>
          <span class="t-c">${icons.sogouTray}</span>
          <span class="t-d">${icons.wifi}</span>
          <span class="t-e">${icons.speaker}</span>
          <span class="t-clock">2</span>
        </div>
      </div>

      <div class="hscroll"><span class="hdots">⋮</span><i class="harrow"></i><i class="hthumb"></i></div>
      <div class="timer">00:00</div>
      <div class="note">批注</div>
      <div class="drop"><div class="drop-ic">${icons.cloud}</div><div class="drop-tx">拖拽上传</div></div>
      <div class="pointer">${icons.cursor}</div>
      <div class="ime">${icons.sogou}<b>中</b><u>°,</u></div>
    `;
  }
}
